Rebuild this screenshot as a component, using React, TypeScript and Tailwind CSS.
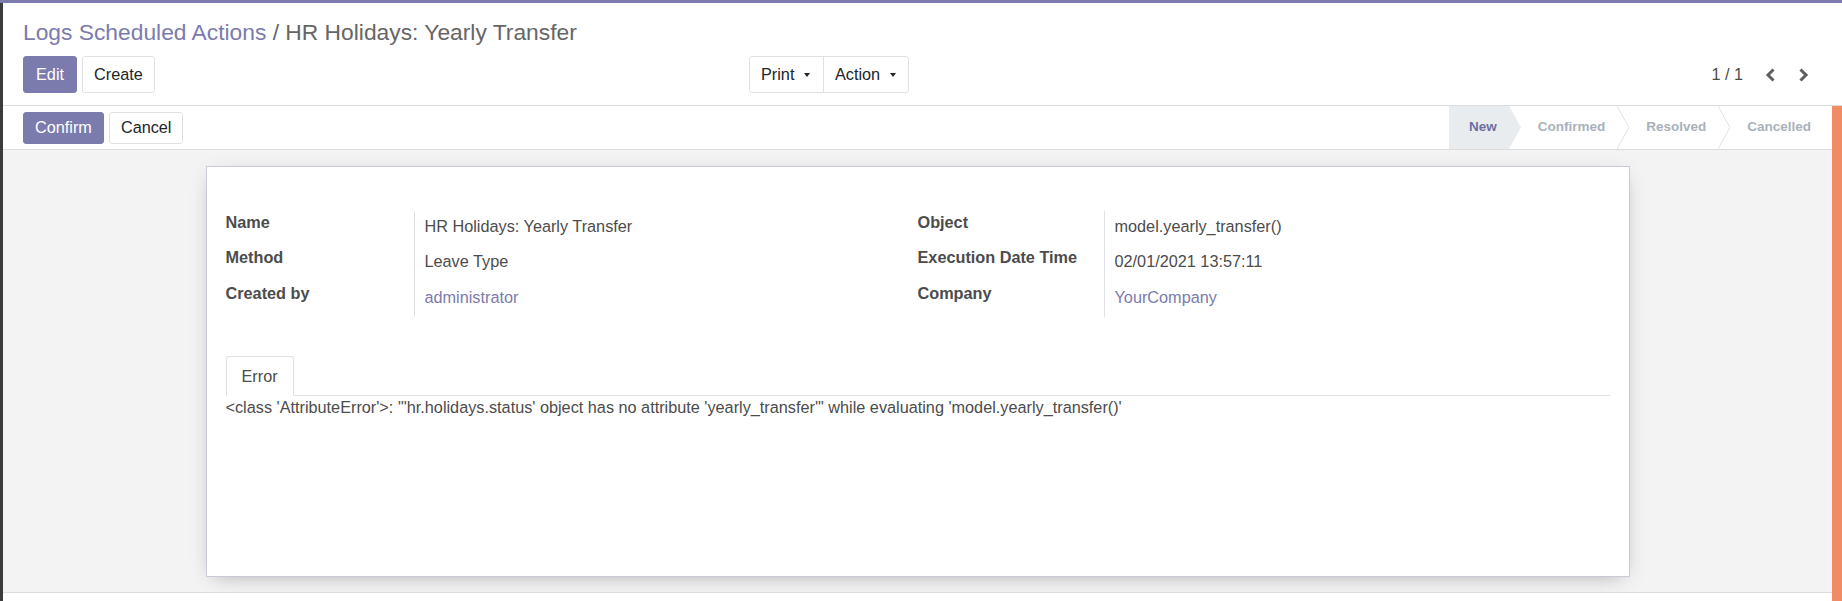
import { Fragment } from 'react';

const fields = {
  left: [
    { label: 'Name', value: 'HR Holidays: Yearly Transfer' },
    { label: 'Method', value: 'Leave Type' },
    { label: 'Created by', value: 'administrator', link: true },
  ],
  right: [
    { label: 'Object', value: 'model.yearly_transfer()' },
    { label: 'Execution Date Time', value: '02/01/2021 13:57:11' },
    { label: 'Company', value: 'YourCompany', link: true },
  ],
};

const stages = ['New', 'Confirmed', 'Resolved', 'Cancelled'];

const Caret = () => (
  <span className="w-0 h-0 border-l-[3.5px] border-r-[3.5px] border-t-[4px] border-l-transparent border-r-transparent border-t-[#212529]" />
);

const Chevron = ({ dir }: { dir: 'left' | 'right' }) => (
  <svg width="11" height="14" viewBox="0 0 11 14">
    <path
      d={dir === 'left' ? 'M8.5 1.5 L3 7 L8.5 12.5' : 'M2.5 1.5 L8 7 L2.5 12.5'}
      fill="none"
      stroke="#5f5f5f"
      strokeWidth="3"
    />
  </svg>
);

const FieldGroup = ({
  rows,
  labelWidth,
}: {
  rows: { label: string; value: string; link?: boolean }[];
  labelWidth: string;
}) => (
  <div className="flex">
    <div className={`${labelWidth} shrink-0`}>
      {rows.map(r => (
        <div key={r.label} className="h-[35.33px] font-bold text-[#4c4c4c] leading-[22px]">
          {r.label}
        </div>
      ))}
    </div>
    <div className="flex-1 border-l border-[#dee2e6] pl-[10px]">
      {rows.map(r => (
        <div
          key={r.label}
          className={`h-[35.33px] pt-[4px] leading-[22px] ${r.link ? 'text-[#7c7bad]' : 'text-[#4c4c4c]'}`}
        >
          {r.value}
        </div>
      ))}
    </div>
  </div>
);

export default function App() {
  return (
    <div className="w-[1842px] h-[601px] overflow-hidden flex flex-col bg-white font-['Liberation_Sans',Arial,sans-serif] text-[16.25px]">
      <div className="h-[3px] bg-[#7c7bad] shrink-0" />
      <div className="flex flex-1">
        <div className="w-[3px] bg-[#3c3c3c] shrink-0" />
        <div className="flex-1 flex flex-col">
          {/* control panel */}
          <div className="h-[103px] border-b border-[#dcdcdc] pl-[20px] pr-[22px] pt-[16px]">
            <div className="text-[22.8px] leading-[27px] whitespace-nowrap">
              <span className="text-[#7c7bad]">Logs Scheduled Actions</span>
              <span className="text-[#666666]"> / HR Holidays: Yearly Transfer</span>
            </div>
            <div className="mt-[10px] h-[37px] flex items-center">
              <div className="w-[726px] flex gap-[5px]">
                <button className="h-[37px] px-[12px] rounded-[3px] border border-[#7c7bad] bg-[#7c7bad] text-white">
                  Edit
                </button>
                <button className="h-[37px] px-[11px] rounded-[3px] border border-[#dee2e6] bg-white text-[#212529]">
                  Create
                </button>
              </div>
              <div className="flex h-[37px] rounded-[3px] border border-[#dee2e6] text-[#212529]">
                <button className="flex items-center gap-[9.5px] pl-[11px] pr-[13px]">
                  Print <Caret />
                </button>
                <button className="flex items-center gap-[9.5px] pl-[11px] pr-[12px] border-l border-[#dee2e6]">
                  Action <Caret />
                </button>
              </div>
              <div className="ml-auto flex items-center">
                <span className="text-[#4c4c4c] mr-[11px]">1 / 1</span>
                <button className="w-[33px] h-[37px] flex items-center justify-center">
                  <Chevron dir="left" />
                </button>
                <button className="w-[33px] h-[37px] flex items-center justify-center">
                  <Chevron dir="right" />
                </button>
              </div>
            </div>
          </div>

          <div className="flex flex-1">
            <div className="flex-1 flex flex-col">
              {/* status bar */}
              <div className="h-[44px] border-b border-[#dcdcdc] flex items-center pl-[20px]">
                <div className="flex gap-[5px]">
                  <button className="h-[32px] px-[11px] rounded-[3px] border border-[#7c7bad] bg-[#7c7bad] text-white">
                    Confirm
                  </button>
                  <button className="h-[32px] px-[11px] rounded-[3px] border border-[#dee2e6] bg-white text-[#212529]">
                    Cancel
                  </button>
                </div>
                <div className="ml-auto flex h-[43px] self-start text-[13.5px] font-bold">
                  {stages.map((s, i) => {
                    const active = i === 0;
                    const last = i === stages.length - 1;
                    return (
                      <Fragment key={s}>
                        <div
                          className={`flex items-center ${active ? 'bg-[#e9ecef] text-[#6f6e9f] pl-[20px]' : 'text-[#aab1bc] pl-[17px]'} ${last ? 'pr-[21px]' : 'pr-[12px]'}`}
                        >
                          {s}
                        </div>
                        {!last && (
                          <svg width="12" height="43" viewBox="0 0 12 43" className="shrink-0">
                            {active ? (
                              <polygon points="0,0 12,21.5 0,43" fill="#e9ecef" />
                            ) : (
                              <polyline points="0,0 12,21.5 0,43" fill="none" stroke="#dfe3e8" strokeWidth="1" />
                            )}
                          </svg>
                        )}
                      </Fragment>
                    );
                  })}
                </div>
              </div>

              {/* sheet area */}
              <div className="h-[442px] bg-[#f3f3f4] pt-[16px]">
                <div className="mx-auto w-[1424px] h-[411px] bg-white border border-[#cacad4] shadow-[0_5px_20px_-8px_rgba(0,0,0,0.35)] px-[19px] pt-[44px] text-[#4c4c4c]">
                  <div className="grid grid-cols-2">
                    <FieldGroup rows={fields.left} labelWidth="w-[188px]" />
                    <FieldGroup rows={fields.right} labelWidth="w-[186px]" />
                  </div>

                  <div className="mt-[39px] flex border-b border-[#dee2e6]">
                    <div className="-mb-px h-[40px] px-[15px] flex items-center rounded-t-[3px] border border-[#dee2e6] border-b-white bg-white">
                      Error
                    </div>
                  </div>
                  <div className="leading-[22px] whitespace-nowrap">
                    {`<class 'AttributeError'>: "'hr.holidays.status' object has no attribute 'yearly_transfer'" while evaluating 'model.yearly_transfer()'`}
                  </div>
                </div>
              </div>
              <div className="flex-1 border-t border-[#dcdcdc]" />
            </div>
            <div className="w-[10px] bg-[#ef8c66] shrink-0" />
          </div>
        </div>
      </div>
    </div>
  );
}
